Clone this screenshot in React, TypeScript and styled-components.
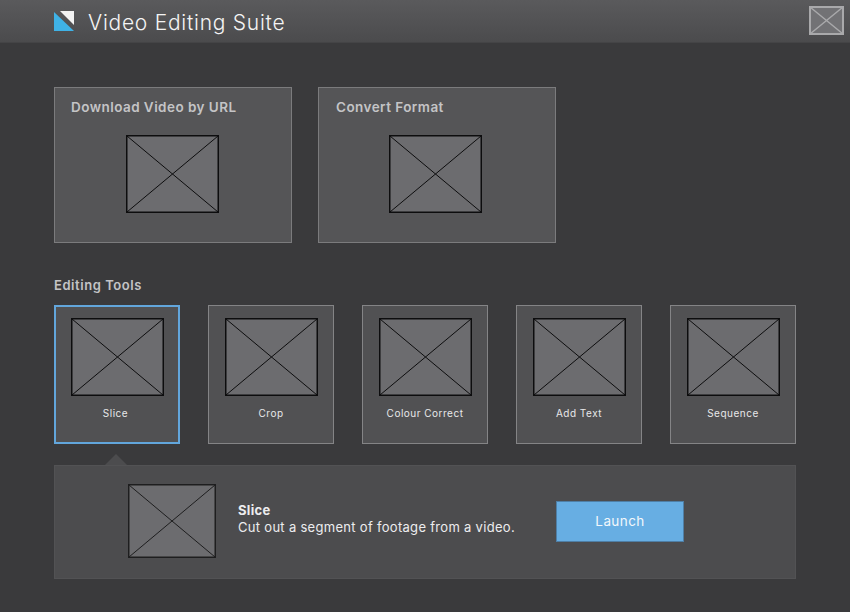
import React, { FC } from 'react';
import styled, { createGlobalStyle } from 'styled-components';

const GlobalStyle = createGlobalStyle`
    html, body {
        margin: 0;
        padding: 0;
        background: #3a3a3c;
    }
    * {
        box-sizing: border-box;
    }
`

const Page = styled.div`
    width: 850px;
    height: 612px;
    overflow: hidden;
    background: #3a3a3c;
    font-family: Inter, "Liberation Sans", sans-serif;
`

const Header = styled.header`
    height: 43px;
    display: flex;
    align-items: center;
    padding: 0 6px 1px 54px;
    background: linear-gradient(to bottom, #5a5a5c, #4b4b4d);
    border-bottom: 1px solid #444446;
`

const Logo = styled.svg`
    width: 21px;
    height: 20px;
    margin-right: 13px;
    flex: none;
`

const Title = styled.h1`
    flex: 1;
    margin: 4px 0 0;
    font-size: 21px;
    font-weight: 300;
    letter-spacing: 0.75px;
    color: #f4f4f4;
`

const Content = styled.main`
    padding: 44px 54px 0;
`

const FeatureRow = styled.div`
    display: flex;
    gap: 26px;
`

const FeatureCard = styled.section<{ $shift: number; $inset: number }>`
    width: 238px;
    height: 156px;
    padding: 10px 0 0 ${({ $inset }) => $inset}px;
    display: flex;
    flex-direction: column;
    background: #555557;
    border: 1px solid #7b7b7d;

    & > svg {
        margin-left: ${({ $shift }) => $shift}px;
    }
`

const CardTitle = styled.h2`
    margin: 0 0 19px;
    font-size: 13.5px;
    line-height: 18px;
    font-weight: 600;
    letter-spacing: 0.45px;
    color: #c4c4c6;
`

const SectionTitle = styled.h3`
    margin: 33px 0 11px;
    font-size: 13px;
    line-height: 18px;
    font-weight: 600;
    letter-spacing: 0.55px;
    color: #c4c4c6;
`

const ToolRow = styled.div`
    display: flex;
    gap: 28px;
`

const ToolTile = styled.button<{ $active?: boolean }>`
    width: 126px;
    height: 139px;
    display: flex;
    flex-direction: column;
    align-items: center;
    background: #515153;
    border: ${({ $active }) => ($active ? '2px solid #62a6dc' : '1px solid #848486')};
    padding: ${({ $active }) => ($active ? '11px 0 0' : '12px 0 0')};
    font-family: inherit;
`

const ToolLabel = styled.span<{ $active?: boolean }>`
    margin-top: 10px;
    margin-right: ${({ $active }) => ($active ? '3px' : '0')};
    font-size: 10px;
    line-height: 14px;
    letter-spacing: 0.5px;
    color: #e8e8ea;
`

const DetailPanel = styled.section`
    position: relative;
    height: 114px;
    margin-top: 21px;
    display: flex;
    align-items: center;
    padding: 0 0 2px 73px;
    background: #4c4c4e;
    border: 1px solid #525254;

    &::before {
        content: '';
        position: absolute;
        left: 50px;
        top: -12px;
        border-left: 11px solid transparent;
        border-right: 11px solid transparent;
        border-bottom: 11px solid #4c4c4e;
    }
`

const DetailText = styled.div`
    width: 318px;
    margin-left: 22px;
    margin-top: -4px;
    font-size: 13px;
    line-height: 17px;
    letter-spacing: 0.3px;
    color: #ececee;
`

const DetailName = styled.div`
    font-weight: 700;
`

const LaunchButton = styled.button`
    width: 128px;
    height: 41px;
    background: #67aee3;
    border: 1px solid #4f7fa6;
    color: #f2f7fb;
    font-family: inherit;
    font-size: 13.5px;
    letter-spacing: 0.4px;
`

const PlaceholderSvg = styled.svg<{ $w: number; $h: number }>`
    display: block;
    flex: none;
    width: ${({ $w }) => $w}px;
    height: ${({ $h }) => $h}px;
`

const WindowIcon = styled.svg`
    display: block;
    flex: none;
    align-self: flex-start;
    width: 35px;
    height: 29px;
    margin-top: 6px;
`

interface PlaceholderProps {
    w: number;
    h: number;
    line?: string;
}

const Placeholder: FC<PlaceholderProps> = ({ w, h, line = '#0d0d0e' }) => (
    <PlaceholderSvg $w={w} $h={h} viewBox={`0 0 ${w} ${h}`}>
        <rect x="0.75" y="0.75" width={w - 1.5} height={h - 1.5} fill="#6c6c6f" stroke={line} strokeWidth="1.5" />
        <path d={`M1 1L${w - 1} ${h - 1}M${w - 1} 1L1 ${h - 1}`} stroke={line} strokeWidth="1" fill="none" />
    </PlaceholderSvg>
);

const TOOLS = ['Slice', 'Crop', 'Colour Correct', 'Add Text', 'Sequence'];

const App: FC = () => (
    <Page>
        <GlobalStyle />
        <Header>
            <Logo viewBox="0 0 21 20">
                <polygon points="0,1 0,20 20,20" fill="#3fb2e6" />
                <polygon points="6,0 20,0 20,14" fill="#f2f2f2" />
            </Logo>
            <Title>Video Editing Suite</Title>
            <WindowIcon viewBox="0 0 35 29">
                <rect x="1" y="1" width="33" height="27" fill="#727275" stroke="#a9a9ab" strokeWidth="2" />
                <path d="M1 1L34 28M34 1L1 28" stroke="#a9a9ab" strokeWidth="1.5" fill="none" />
            </WindowIcon>
        </Header>
        <Content>
            <FeatureRow>
                <FeatureCard $inset={16} $shift={55}>
                    <CardTitle>Download Video by URL</CardTitle>
                    <Placeholder w={93} h={78} />
                </FeatureCard>
                <FeatureCard $inset={17} $shift={53}>
                    <CardTitle>Convert Format</CardTitle>
                    <Placeholder w={93} h={78} />
                </FeatureCard>
            </FeatureRow>
            <SectionTitle>Editing Tools</SectionTitle>
            <ToolRow>
                {TOOLS.map((tool, index) => (
                    <ToolTile key={tool} $active={index === 0}>
                        <Placeholder w={93} h={78} />
                        <ToolLabel $active={index === 0}>{tool}</ToolLabel>
                    </ToolTile>
                ))}
            </ToolRow>
            <DetailPanel>
                <Placeholder w={88} h={74} line="#1e1e1f" />
                <DetailText>
                    <DetailName>Slice</DetailName>
                    Cut out a segment of footage from a video.
                </DetailText>
                <LaunchButton>Launch</LaunchButton>
            </DetailPanel>
        </Content>
    </Page>
);

export default App;
